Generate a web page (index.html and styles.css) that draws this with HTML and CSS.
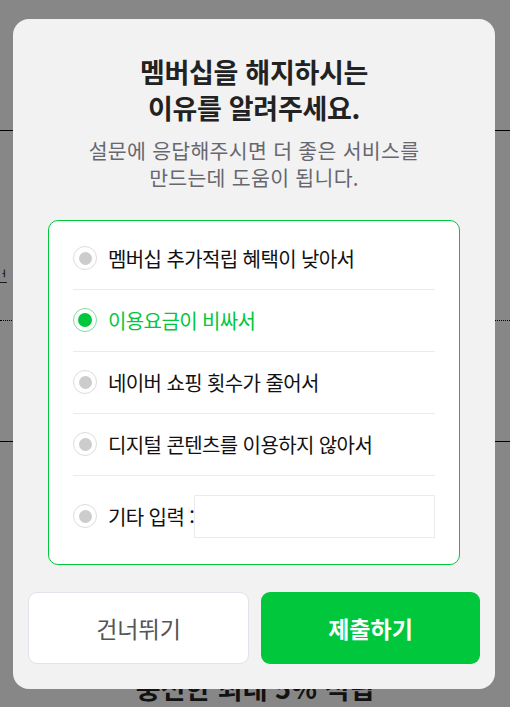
FILE: index.html
```html
<!DOCTYPE html>
<html lang="ko">
<head>
<meta charset="utf-8">
<link rel="stylesheet" href="styles.css">
</head>
<body>
<div class="page">
  <div class="page-line line-a"></div>
  <div class="page-frag frag-a">t</div>
  <div class="page-frag frag-b">ᅥ</div>
  <div class="page-line line-b"></div>
  <div class="page-line line-c"></div>
  <div class="page-bottom">충전한 최대 5% 적립</div>
</div>
<div class="overlay">
  <div class="modal">
    <h1 class="title">멤버십을 해지하시는<br>이유를 알려주세요.</h1>
    <p class="subtitle">설문에 응답해주시면 더 좋은 서비스를<br>만드는데 도움이 됩니다.</p>
    <div class="options">
      <label class="option"><span class="radio"></span><span class="opt-text">멤버십 추가적립 혜택이 낮아서</span></label>
      <label class="option selected"><span class="radio"></span><span class="opt-text">이용요금이 비싸서</span></label>
      <label class="option"><span class="radio"></span><span class="opt-text">네이버 쇼핑 횟수가 줄어서</span></label>
      <label class="option"><span class="radio"></span><span class="opt-text">디지털 콘텐츠를 이용하지 않아서</span></label>
      <label class="option option-etc"><span class="radio"></span><span class="opt-text">기타 입력 :</span><span class="etc-input"></span></label>
    </div>
    <div class="buttons">
      <button class="btn btn-skip">건너뛰기</button>
      <button class="btn btn-submit">제출하기</button>
    </div>
  </div>
</div>
</body>
</html>
```
FILE: styles.css
```css
* { box-sizing: border-box; }
html, body { margin: 0; padding: 0; }
body {
  width: 510px;
  height: 707px;
  overflow: hidden;
  background: #fff;
  font-family: "Noto Sans CJK KR", "Noto Sans", sans-serif;
}
.page {
  position: relative;
  height: 707px;
  overflow: hidden;
}
.page-line {
  height: 0;
  border-top: 1px solid #000;
}
.line-a { margin-top: 130px; }
.page-frag {
  font-size: 14px;
  line-height: 20px;
  color: #1e5bb0;
  margin-left: -6px;
}
.frag-a { margin-top: 89px; }
.frag-b { margin-top: 25px; color: #333; text-decoration: underline; }
.line-b { margin-top: 35px; border-top: 1px dotted #000; }
.line-c { margin-top: 120px; }
.page-bottom {
  margin-top: 231px;
  text-align: center;
  font-size: 27px;
  font-weight: 700;
  color: #222;
  line-height: 30px;
}
.overlay {
  position: fixed;
  inset: 0;
  background: rgba(0, 0, 0, 0.47);
  display: flex;
  align-items: center;
  justify-content: center;
  padding-right: 2px;
}
.modal {
  width: 482px;
  height: 670px;
  background: #f2f2f2;
  border-radius: 16px;
  padding: 35px 15px 25px 15px;
  display: flex;
  flex-direction: column;
}
.title {
  margin: 0;
  text-align: center;
  font-size: 27px;
  line-height: 36px;
  font-weight: 700;
  color: #222;
  letter-spacing: -0.3px;
}
.subtitle {
  margin: 11px 0 0;
  text-align: center;
  font-size: 20.5px;
  line-height: 27px;
  color: #67676f;
  letter-spacing: 0.3px;
}
.options {
  margin: 29px 20px 0 20px;
  background: #fff;
  border: 1px solid #00c73c;
  border-radius: 10px;
  padding: 7px 24px 7px;
}
.option {
  display: flex;
  align-items: center;
  height: 62px;
  border-bottom: 1px solid #ebebeb;
  font-size: 20px;
  letter-spacing: -0.6px;
  color: #111;
}
.opt-text { white-space: nowrap; }
.radio {
  width: 24px;
  height: 24px;
  border-radius: 50%;
  border: 1px solid #dcdcdc;
  background: #fff;
  display: flex;
  align-items: center;
  justify-content: center;
  margin-right: 11px;
  flex: none;
}
.radio::after {
  content: "";
  width: 13px;
  height: 13px;
  border-radius: 50%;
  background: #cccccc;
}
.option.selected { color: #00c73c; }
.option.selected .radio { border-color: #7fdea0; }
.option.selected .radio::after { background: #00c73c; width: 14px; height: 14px; }
.option-etc {
  border-bottom: none;
  height: auto;
  padding: 19px 0 19px;
}
.etc-input {
  flex: 1;
  min-width: 0;
  height: 43px;
  border: 1px solid #ebebeb;
  background: #fff;
  margin-left: 0;
}
.buttons {
  display: flex;
  gap: 12px;
  margin-top: 27px;
}
.btn {
  flex: 1;
  height: 72px;
  border-radius: 9px;
  font-family: "Noto Sans CJK KR", "Noto Sans", sans-serif;
  font-size: 23px;
  cursor: pointer;
}
.btn-skip {
  background: #fff;
  border: 1px solid #e2e2ea;
  color: #555;
}
.btn-submit {
  background: #00c73c;
  border: none;
  color: #fff;
  font-weight: 700;
}
```
